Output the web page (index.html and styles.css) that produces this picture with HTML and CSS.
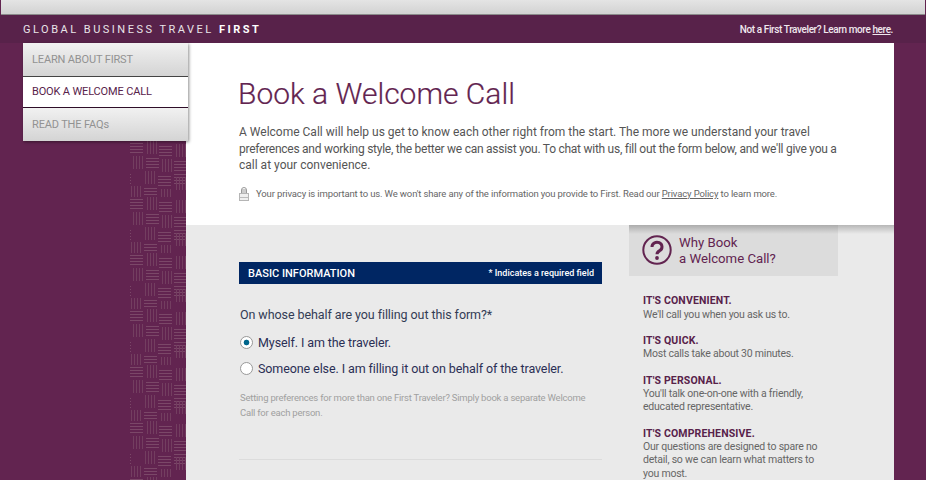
FILE: index.html
```html
<!DOCTYPE html>
<html lang="en">
<head>
    <meta charset="UTF-8">
    <meta name="viewport" content="width=device-width, initial-scale=1.0">
    <title>Book a Welcome Call</title>
    <link rel="stylesheet" href="styles.css">
</head>
<body>
    <div class="browser-bar"></div>
    <header class="site-header">
        <div class="brand">GLOBAL BUSINESS TRAVEL <strong>FIRST</strong></div>
        <div class="header-note">Not a First Traveler? Learn more <a href="#">here</a>.</div>
    </header>

    <div class="page">
        <aside class="side">
            <nav class="side-nav">
                <a href="#">LEARN ABOUT FIRST</a>
                <a href="#" class="active">BOOK A WELCOME CALL</a>
                <a href="#">READ THE FAQs</a>
            </nav>
            <svg class="weave" width="56" height="340">
                <defs>
                    <g id="wh"><path d="M0 .5h13M0 3.5h13M0 6.5h13M0 9.5h13" stroke="#7b4768" fill="none"/></g>
                    <g id="wv"><path d="M.5 0v13M3.5 0v13M6.5 0v13M9.5 0v13" stroke="#733e60" fill="none"/></g>
                    <pattern id="weave" width="56" height="56" patternUnits="userSpaceOnUse">
                        <use href="#wh" x="0" y="2"/>
                        <use href="#wv" x="17" y="0"/>
                        <use href="#wh" x="29" y="5"/>
                        <use href="#wv" x="46" y="3"/>
                        <use href="#wv" x="3" y="15"/>
                        <use href="#wh" x="16" y="17"/>
                        <use href="#wv" x="32" y="18"/>
                        <use href="#wh" x="44" y="20"/>
                        <use href="#wh" x="-12" y="33"/>
                        <use href="#wh" x="44" y="33"/>
                        <use href="#wv" x="15" y="30"/>
                        <use href="#wh" x="28" y="35"/>
                        <use href="#wv" x="46" y="36"/>
                        <use href="#wv" x="1" y="45"/>
                        <use href="#wh" x="14" y="47"/>
                        <use href="#wv" x="31" y="48"/>
                    </pattern>
                </defs>
                <rect width="56" height="340" fill="url(#weave)"/>
            </svg>
        </aside>

        <main class="panel">
            <section class="intro">
                <h1>Book a Welcome Call</h1>
                <p class="lead">A Welcome Call will help us get to know each other right from the start. The more we understand your travel<br>
                <span class="tight">preferences and working style, the better we can assist you. To chat with us, fill out the form below, and we'll give you a</span><br>
                call at your convenience.</p>
                <p class="privacy">
                    <svg class="lock" width="10" height="14" viewBox="0 0 10 14">
                        <path d="M2.5 6.5V3a2.5 2.5 0 0 1 5 0v3.5M4 2v4M6 2v4" fill="none" stroke="#999" stroke-width="1"/>
                        <rect x="0.5" y="6.5" width="9" height="7" fill="#efefef" stroke="#b5b5b5"/>
                        <path d="M1 10.5h8" stroke="#bbb"/>
                    </svg>
                    <span>Your privacy is important to us. We won't share any of the information you provide to First. Read our <a href="#">Privacy Policy</a> to learn more.</span>
                </p>
            </section>

            <div class="lower">
                <form class="form-col">
                    <div class="form-title">
                        <span class="form-title-main">BASIC INFORMATION</span>
                        <span class="form-title-note">* Indicates a required field</span>
                    </div>
                    <p class="question">On whose behalf are you filling out this form?*</p>
                    <label class="choice">
                        <span class="radio checked"></span>
                        Myself. I am the traveler.
                    </label>
                    <label class="choice">
                        <span class="radio"></span>
                        Someone else. I am filling it out on behalf of the traveler.
                    </label>
                    <p class="hint">Setting preferences for more than one First Traveler? Simply book a separate Welcome Call for each person.</p>
                    <hr class="divider">
                </form>

                <aside class="why">
                    <div class="why-box">
                        <svg width="30" height="30" viewBox="0 0 30 30">
                            <circle cx="15" cy="15" r="13.7" fill="none" stroke="#622450" stroke-width="2"/>
                            <path d="M10 12a5 4.6 0 1 1 7.8 3.6c-1.8 1.1-2.8 1.7-2.8 3.6" fill="none" stroke="#622450" stroke-width="3"/>
                            <circle cx="15" cy="23" r="1.9" fill="#622450"/>
                        </svg>
                        <div class="why-title">Why Book<br>a Welcome Call?</div>
                    </div>
                    <div class="reason">
                        <h3>IT'S CONVENIENT.</h3>
                        <p>We'll call you when you ask us to.</p>
                    </div>
                    <div class="reason">
                        <h3>IT'S QUICK.</h3>
                        <p>Most calls take about 30 minutes.</p>
                    </div>
                    <div class="reason">
                        <h3>IT'S PERSONAL.</h3>
                        <p>You'll talk one-on-one with a friendly, educated representative.</p>
                    </div>
                    <div class="reason">
                        <h3>IT'S COMPREHENSIVE.</h3>
                        <p>Our questions are designed to spare no detail, so we can learn what matters to you most.</p>
                    </div>
                </aside>
            </div>
        </main>
    </div>
</body>
</html>
```

FILE: styles.css
```css
* {
    box-sizing: border-box;
}

html, body {
    height: 480px;
    overflow: hidden;
}

body {
    margin: 0;
    background-color: #622450;
    font-family: Roboto, "Liberation Sans", sans-serif;
    color: #555;
}

a {
    color: inherit;
}

.browser-bar {
    height: 15px;
    margin: 0 1px;
    background: linear-gradient(#e4e4e4, #d2d2d2);
    border-bottom: 1px solid #8a8a8a;
}

.site-header {
    height: 28px;
    padding: 0 33px 0 23px;
    display: flex;
    align-items: center;
    justify-content: space-between;
    background-color: #58224a;
    color: #eee;
}

.brand {
    font-size: 11px;
    letter-spacing: 2.5px;
    color: #e8e4e8;
}

.brand strong {
    color: #fff;
    font-weight: 700;
}

.header-note {
    font-size: 10px;
    font-weight: 500;
    letter-spacing: -0.39px;
    color: #f0e8ee;
}

.page {
    display: flex;
}

.side {
    width: 186px;
    flex: none;
    position: relative;
}

.side-nav {
    position: relative;
    z-index: 2;
    width: 165px;
    margin-left: 23px;
    box-shadow: 1px 1px 3px rgba(0, 0, 0, 0.45);
}

.side-nav a {
    display: flex;
    align-items: center;
    height: 33px;
    padding: 0 0 1px 9px;
    font-size: 11px;
    letter-spacing: -0.15px;
    text-decoration: none;
    color: #929292;
    background: linear-gradient(#f1f1f1, #d4d4d4);
}

.side-nav a.active {
    height: 32px;
    padding-bottom: 2px;
    background: #fff;
    color: #58224a;
    border-top: 1px solid #444;
    border-bottom: 1px solid #2e0d28;
}

.weave {
    display: block;
    position: absolute;
    top: 98px;
    left: 130px;
}

.panel {
    width: 708px;
    flex: none;
    background-color: #eaeaea;
    height: 437px;
}

.intro {
    height: 182px;
    padding: 31px 53px 0 52px;
    background-color: #fff;
}

h1 {
    margin: 0;
    font-size: 30px;
    line-height: 40px;
    font-weight: 300;
    color: #622450;
    -webkit-text-stroke: 0.2px #622450;
}

.lead {
    margin: 10px 0 0 1px;
    font-size: 12px;
    line-height: 16.5px;
    white-space: nowrap;
    color: #555;
}

.tight {
    letter-spacing: -0.26px;
}

.privacy {
    margin: 13px 0 0 1px;
    display: flex;
    align-items: center;
    gap: 7px;
    font-size: 9.5px;
    letter-spacing: -0.14px;
    color: #666;
}

.lock {
    flex: none;
}

.lower {
    display: flex;
    padding-left: 53px;
}

.form-col {
    width: 363px;
    padding-top: 37px;
}

.form-title {
    height: 22px;
    padding: 0 8px 0 9px;
    display: flex;
    align-items: center;
    justify-content: space-between;
    background-color: #002663;
    color: #fff;
}

.form-title-main {
    font-size: 11px;
    font-weight: 500;
}

.form-title-note {
    font-size: 9px;
    font-weight: 500;
}

.question {
    margin: 22px 0 0 1px;
    font-size: 12.5px;
    line-height: 18px;
    letter-spacing: -0.08px;
    color: #333c55;
}

.choice {
    display: flex;
    align-items: center;
    gap: 5px;
    margin-top: 9px;
    height: 18px;
    font-size: 12.5px;
    letter-spacing: -0.1px;
    color: #2b2f55;
}

.choice + .choice {
    margin-top: 8px;
}

.radio {
    width: 13px;
    height: 13px;
    margin-left: 1px;
    flex: none;
    border-radius: 50%;
    background-color: #fff;
    border: 1px solid #999;
}

.radio.checked {
    background: radial-gradient(circle, #00668c 0 2.5px, #fff 3.2px);
}

.hint {
    margin: 13px 0 0 1px;
    font-size: 9.5px;
    line-height: 15px;
    letter-spacing: -0.22px;
    color: #a0a0a0;
}

.divider {
    margin: 39px 0 0;
    border: 0;
    border-top: 1px solid #dcdcdc;
}

.why {
    position: relative;
    width: 265px;
    margin-left: 27px;
}

/* shadow the white panel drops on this column only */
.why::before {
    content: "";
    position: absolute;
    top: 0;
    left: 0;
    right: 0;
    height: 9px;
    background: linear-gradient(rgba(0, 0, 0, 0.22), rgba(0, 0, 0, 0));
}

.why-box {
    width: 209px;
    height: 51px;
    padding: 10px 0 0 13px;
    display: flex;
    gap: 7px;
    background-color: #dcdcdc;
}

.why-title {
    margin-top: 0;
    font-size: 13.2px;
    line-height: 15.5px;
    color: #622450;
}

.reason {
    width: 192px;
    margin-top: 13px;
    padding-left: 14px;
    font-size: 10.5px;
    line-height: 13.3px;
}

.why-box + .reason {
    margin-top: 18px;
}

.reason h3 {
    margin: 0;
    font-size: 10.5px;
    line-height: 13.5px;
    font-weight: 700;
    letter-spacing: 0.15px;
    color: #58224a;
}

.reason p {
    margin: 0;
    letter-spacing: -0.22px;
    color: #666;
}
```
